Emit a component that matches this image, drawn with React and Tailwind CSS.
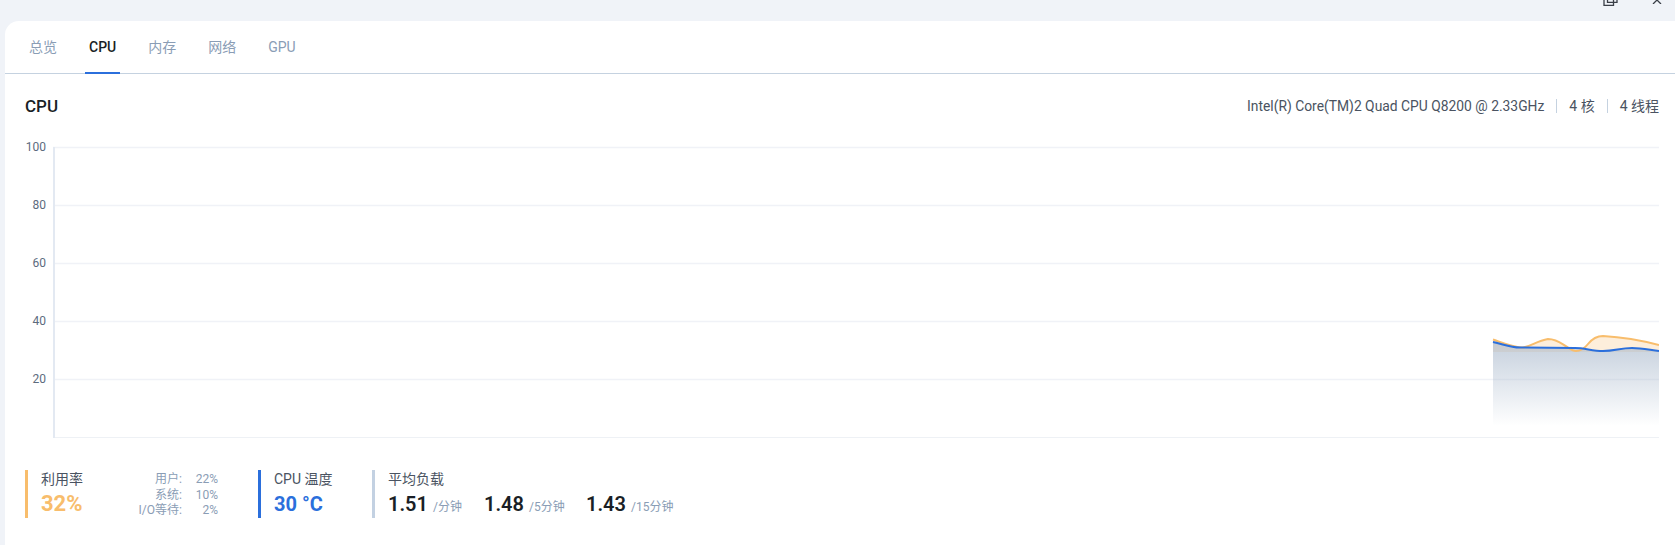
import React from "react";

const FONT = "font-['Roboto','Noto_Sans_CJK_SC',sans-serif]";

const ticks = [100, 80, 60, 40, 20];
const usage = [
  ["用户:", "22%"],
  ["系统:", "10%"],
  ["I/O等待:", "2%"],
];

const orangeLine =
  "M1493 339.5C1503 343 1512 347 1522 347.5C1530 347.5 1536 341 1548 339C1558 339 1563 345 1568 347.5C1571 349.5 1573 351 1576 351C1580 351 1584 349 1588 344C1592 339 1596 336 1603 336C1620 337 1640 340 1659 345";
const blueLine =
  "M1493 342C1503 344 1510 347.5 1520 347.5L1575 348C1585 348 1592 351 1603 351C1615 351 1620 348 1632 348C1642 348 1650 350 1659 351";

function TabBar() {
  const tabs = ["总览", "CPU", "内存", "网络", "GPU"];
  return (
    <div className="flex h-[53px] gap-6 border-b border-[#c5d2e0] pl-5">
      {tabs.map((t) => (
        <div
          key={t}
          className={
            t === "CPU"
              ? "flex h-[53px] items-center justify-center border-b-[2px] border-[#2b6fdc] px-1 pt-[2px] text-[14px] font-medium text-[#1a1f26]"
              : "flex h-[52px] items-center justify-center px-1 pt-[1px] text-[14px] text-[#8a9db5]"
          }
        >
          {t}
        </div>
      ))}
    </div>
  );
}

function Chart() {
  return (
    <div className="mt-[27px] flex h-[292px]">
      <div className="-mt-[5px] flex w-[21px] flex-col gap-[46px] text-right text-[12px] leading-[12px] text-[#5d6b7e]">
        {ticks.map((v) => (
          <div key={v} className="h-[12px]">{v}</div>
        ))}
      </div>
      <svg width="1606" height="292" viewBox="53 146 1606 292" className="ml-[7px] block">
        <defs>
          <linearGradient id="load" x1="0" y1="0" x2="0" y2="1">
            <stop offset="0" stopColor="#a3b4c9" stopOpacity="0.62" />
            <stop offset="1" stopColor="#a3b4c9" stopOpacity="0" />
          </linearGradient>
        </defs>
        {[147.5, 205.5, 263.5, 321.5, 379.5].map((y) => (
          <line key={y} x1="53" x2="1659" y1={y} y2={y} stroke="#f0f2f7" strokeWidth="1.5" />
        ))}
        <line x1="53" x2="1659" y1="437.5" y2="437.5" stroke="#eef1f5" />
        <line x1="54" x2="54" y1="147" y2="438" stroke="#e3e9f2" strokeWidth="2" />
        <path d={`${orangeLine}L1659 352L1493 352Z`} fill="#fdeedb" />
        <path d={`${blueLine}L1659 426L1493 426Z`} fill="url(#load)" />
        <path d={orangeLine} fill="none" stroke="#f8bd6c" strokeWidth="2" />
        <path d={blueLine} fill="none" stroke="#2b6fdc" strokeWidth="2" />
      </svg>
    </div>
  );
}

function Stat({ color, label, children }) {
  return (
    <div className={`flex h-[48px] flex-col border-l-[3px] pl-[13px] ${color}`}>
      <div className="text-[14px] leading-[18px] text-[#4a5361]">{label}</div>
      {children}
    </div>
  );
}

function Load({ value, unit, className }) {
  return (
    <div className={`flex items-baseline ${className}`}>
      <span className="text-[20px] font-semibold leading-[26px] text-[#1a1f26]">{value}</span>
      <span className="ml-[5px] text-[12px] text-[#8a9db5]">{unit}</span>
    </div>
  );
}

export default function App() {
  return (
    <div className={`h-[545px] w-[1675px] overflow-hidden bg-[#f0f3f8] ${FONT}`}>
      {/* window controls, cut off by the top edge */}
      <div className="flex h-[21px] justify-end overflow-hidden pr-[13px]">
        <svg width="15" height="6" viewBox="0 0 15 6" className="mr-[34px]" fill="none" stroke="#3a3f47" strokeWidth="1.3">
          <path d="M1 0V5.4H10.5V0M4.5 0V2.4H14V0" />
        </svg>
        <svg width="10" height="4" viewBox="0 0 10 4" fill="none" stroke="#3a3f47" strokeWidth="1.3">
          <path d="M5 0L1 4M5 0L9 4" />
        </svg>
      </div>
      <div className="ml-[5px] h-[524px] rounded-tl-[14px] bg-white">
        <TabBar />
        <div className="pr-[16px] pl-[20px]">
          <div className="mt-[19px] flex h-[26px] items-center justify-between">
            <div className="pt-[2px] text-[17px] font-medium text-[#1a1f26]">CPU</div>
            <div className="flex items-center text-[14px] text-[#4a5361]">
              <span className="text-[13.85px]">Intel(R) Core(TM)2 Quad CPU Q8200 @ 2.33GHz</span>
              <span className="mx-[12px] h-[14px] w-px bg-[#c5d2e0]" />
              <span>4 核</span>
              <span className="mx-[12px] h-[14px] w-px bg-[#c5d2e0]" />
              <span>4 线程</span>
            </div>
          </div>
          <Chart />
          <div className="mt-[32px] flex">
            <div className="flex w-[233px]">
              <Stat color="border-[#f8bd6c]" label="利用率">
                <div className="pt-[2px] text-[22px] font-bold leading-[28px] text-[#f8bd6c]">32%</div>
              </Stat>
              <div className="mt-[2px] ml-auto mr-[40px] grid h-fit grid-cols-[auto_36px] text-right text-[12px] leading-[15.5px] text-[#8a9db5]">
                {usage.map(([k, v]) => (
                  <React.Fragment key={k}>
                    <span>{k}</span>
                    <span>{v}</span>
                  </React.Fragment>
                ))}
              </div>
            </div>
            <div className="w-[114px]">
              <Stat color="border-[#2b6fdc]" label="CPU 温度">
                <div className="pt-[2px] text-[20px] font-bold leading-[28px] text-[#2b6fdc]">30 °C</div>
              </Stat>
            </div>
            <Stat color="border-[#c3d1e2]" label="平均负载">
              <div className="flex pt-[3px]">
                <Load value="1.51" unit="/分钟" className="w-[96px]" />
                <Load value="1.48" unit="/5分钟" className="w-[102px]" />
                <Load value="1.43" unit="/15分钟" />
              </div>
            </Stat>
          </div>
        </div>
      </div>
    </div>
  );
}
